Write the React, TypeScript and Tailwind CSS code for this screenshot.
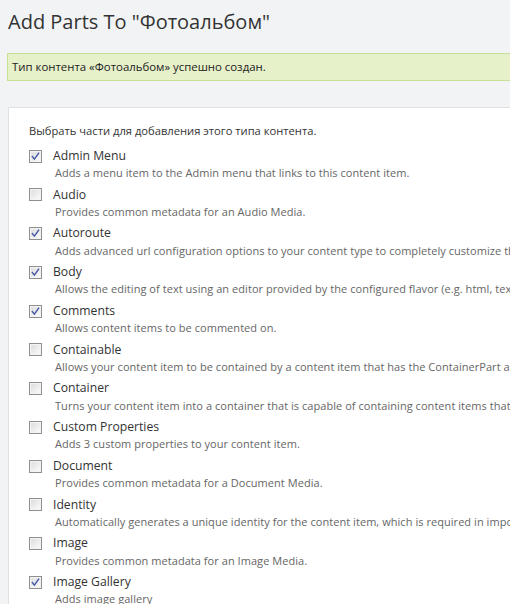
import type { ReactNode } from 'react';

interface Part {
  name: string;
  description: string;
  checked: boolean;
}

const parts: Part[] = [
  { name: 'Admin Menu', description: 'Adds a menu item to the Admin menu that links to this content item.', checked: true },
  { name: 'Audio', description: 'Provides common metadata for an Audio Media.', checked: false },
  {
    name: 'Autoroute',
    description: 'Adds advanced url configuration options to your content type to completely customize the url pattern for a content item.',
    checked: true,
  },
  {
    name: 'Body',
    description: 'Allows the editing of text using an editor provided by the configured flavor (e.g. html, text, markdown).',
    checked: true,
  },
  { name: 'Comments', description: 'Allows content items to be commented on.', checked: true },
  {
    name: 'Containable',
    description: 'Allows your content item to be contained by a content item that has the ContainerPart attached.',
    checked: false,
  },
  {
    name: 'Container',
    description: 'Turns your content item into a container that is capable of containing content items that have the ContainablePart attached.',
    checked: false,
  },
  { name: 'Custom Properties', description: 'Adds 3 custom properties to your content item.', checked: false },
  { name: 'Document', description: 'Provides common metadata for a Document Media.', checked: false },
  {
    name: 'Identity',
    description: 'Automatically generates a unique identity for the content item, which is required in import/export scenarios where one content item references another.',
    checked: false,
  },
  { name: 'Image', description: 'Provides common metadata for an Image Media.', checked: false },
  { name: 'Image Gallery', description: 'Adds image gallery', checked: true },
];

function Checkbox({ checked }: { checked: boolean }) {
  return (
    <svg width="13" height="13" viewBox="0 0 13 13" className="shrink-0">
      <defs>
        <linearGradient id="cbFill" x1="0" y1="0" x2="1" y2="1">
          <stop offset="0" stopColor="#dcdcdc" />
          <stop offset="1" stopColor="#fbfbfb" />
        </linearGradient>
      </defs>
      <rect x="0.5" y="0.5" width="12" height="12" fill="#f4f4f4" stroke="#8e8f8f" />
      <rect x="2" y="2" width="9" height="9" fill="url(#cbFill)" stroke="#f0f0f0" strokeWidth="0.5" />
      {checked && (
        <path d="M3.4 6.6 L5.4 9.1 L9.6 3.2" fill="none" stroke="#4658a8" strokeWidth="1.5" strokeLinecap="square" />
      )}
    </svg>
  );
}

function PartRow({ part }: { part: Part }): ReactNode {
  return (
    <div className="mb-[4.75px]">
      <label className="flex h-[18px] items-center gap-[11px] text-[12.2px] text-[#333]">
        <Checkbox checked={part.checked} />
        <span>{part.name}</span>
      </label>
      {/* descriptions run past the window edge, like the original page */}
      <p className="pl-[26px] text-[11px] leading-[16px] tracking-[0.05px] text-[#666]">{part.description}</p>
    </div>
  );
}

export default function App() {
  return (
    <div className="h-[604px] w-[510px] overflow-hidden whitespace-nowrap bg-[#f2f3f5] font-['Open_Sans',sans-serif]">
      <h1 className="pl-2 pt-2 text-[20px] leading-[28px] text-[#333]">Add Parts To "Фотоальбом"</h1>

      <div className="ml-[7px] mt-[17px] flex h-[28px] w-[640px] items-center border border-[#c8df98] bg-[#e6f0c9] px-1 text-[11.4px] text-[#222]">
        Тип контента «Фотоальбом» успешно создан.
      </div>

      <div className="ml-2 mt-[26px] w-[800px] border-l border-t border-[#dfe1e4] bg-white pl-5 pt-[14px]">
        <p className="mb-[7px] text-[11.2px] leading-[18px] text-[#333]">Выбрать части для добавления этого типа контента.</p>
        {parts.map((part) => (
          <PartRow key={part.name} part={part} />
        ))}
      </div>
    </div>
  );
}
